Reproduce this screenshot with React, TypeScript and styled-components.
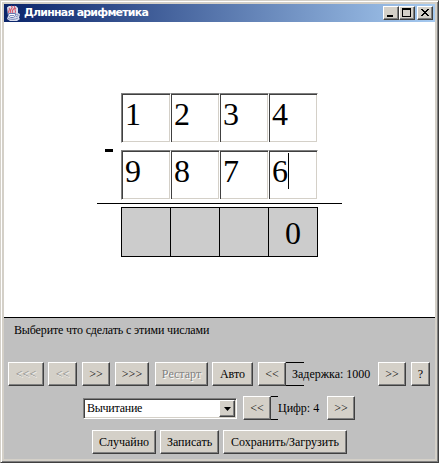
import React from "react";
import styled, { createGlobalStyle } from "styled-components";

const GlobalStyle = createGlobalStyle`
  * { box-sizing: border-box; }
  body { margin: 0; background: #d4d0c8; overflow: hidden; }
`;

const WindowFrame = styled.div`
  width: 439px;
  height: 463px;
  padding: 3px;
  display: flex;
  flex-direction: column;
  background: #d4d0c8;
  border: 1px solid;
  border-color: #d4d0c8 #404040 #404040 #d4d0c8;
  box-shadow: inset 1px 1px #fff, inset -1px -1px #808080;
  font-family: "Liberation Serif", serif;
  font-size: 12px;
  color: #000;
`;

const TitleBar = styled.header`
  height: 18px;
  display: flex;
  align-items: center;
  padding: 0 2px 0 1px;
  background: linear-gradient(to right, #0a246a, #a6caf0);
`;

const Title = styled.h1`
  margin: 0 auto 0 3px;
  font: bold 11px/18px "DejaVu Sans", sans-serif;
  letter-spacing: -0.8px;
  color: #fff;
  white-space: nowrap;
`;

const CaptionButton = styled.button<{ $gap?: boolean }>`
  width: 16px;
  height: 14px;
  padding: 0;
  margin: 0 0 0 ${(p) => (p.$gap ? 2 : 0)}px;
  display: flex;
  background: #d4d0c8;
  border: 1px solid;
  border-color: #fff #404040 #404040 #fff;
  box-shadow: inset -1px -1px #808080;
`;

const Canvas = styled.main`
  height: 295px;
  display: flex;
  flex-direction: column;
  background: #fff;
  padding: 71px 0 0 93px;
`;

const OperandArea = styled.div`
  display: flex;
  align-items: center;
  height: 107px;
`;

const Operator = styled.span`
  width: 24px;
  height: 3px;
  margin-top: 8px;
  padding-left: 8px;
  &::after {
    content: "";
    display: block;
    width: 8px;
    height: 3px;
    background: #000;
  }
`;

const Operands = styled.div`
  display: grid;
  row-gap: 7px;
`;

const DigitRow = styled.div`
  display: grid;
  grid-template-columns: repeat(4, 49px);
`;

const DigitField = styled.div`
  width: 50px;
  height: 50px;
  display: flex;
  border: 1px solid;
  border-color: #808080 #fff #fff #808080;
  box-shadow: inset 1px 1px #404040, inset -1px -1px #d4d0c8;
  padding: 1px 0 0 3px;
  font-size: 32px;
  line-height: 38px;
  & + & { border-left-color: #fff; }
`;

const Caret = styled.i`
  width: 1px;
  height: 36px;
  margin: 1px 0 0 0;
  background: #000;
`;

const SumLine = styled.div`
  width: 245px;
  height: 1px;
  margin: 3px 0 3px;
  background: #000;
`;

const ResultRow = styled.div`
  display: grid;
  grid-template-columns: 50px repeat(3, 49px);
  margin-left: 24px;
`;

const ResultCell = styled.div`
  height: 50px;
  border: 1px solid #000;
  background: #ccc;
  text-align: center;
  font-size: 32px;
  line-height: 50px;
  & + & { border-left: 0; }
`;

const Panel = styled.section`
  flex: 1;
  background: #c0c0c0;
  border-top: 1px solid #000;
`;

const Message = styled.p`
  margin: 0;
  padding: 5px 0 0 10px;
  height: 44px;
  line-height: 14px;
  letter-spacing: -0.14px;
`;

const Controls = styled.div<{ $left: number; $gapBelow?: number }>`
  display: flex;
  align-items: center;
  height: 24px;
  margin: 0 0 ${(p) => p.$gapBelow ?? 0}px;
  padding-left: ${(p) => p.$left}px;
`;

const PushButton = styled.button<{ $width: number; $after?: number }>`
  flex: none;
  width: ${(p) => p.$width}px;
  height: 24px;
  margin: 0 ${(p) => p.$after ?? 0}px 0 0;
  padding: 0 0 1px;
  background: #d4d0c8;
  border: 1px solid;
  border-color: #fff #404040 #404040 #fff;
  box-shadow: inset -1px -1px #808080;
  font: inherit;
  line-height: 14px;
  white-space: nowrap;
  color: #000;
  &:disabled {
    color: #808080;
    text-shadow: 1px 1px #fff;
  }
`;

const Bracketed = styled.div<{ $width: number; $hook: number; $indent: number }>`
  flex: none;
  width: ${(p) => p.$width}px;
  height: 24px;
  padding-left: ${(p) => p.$indent}px;
  line-height: 24px;
  white-space: nowrap;
  background:
    linear-gradient(#000, #000) 0 0 / ${(p) => p.$hook}px 1px no-repeat,
    linear-gradient(#000, #000) 0 23px / ${(p) => p.$hook}px 1px no-repeat;
`;

const Combo = styled.div`
  width: 154px;
  height: 21px;
  margin: 1px 6px 0 0;
  display: flex;
  align-items: center;
  justify-content: space-between;
  padding: 1px 1px 1px 3px;
  background: #fff;
  border: 1px solid;
  border-color: #808080 #fff #fff #808080;
  box-shadow: inset 1px 1px #404040, inset -1px -1px #d4d0c8;
  letter-spacing: -0.25px;
`;

const ComboArrow = styled.button`
  width: 16px;
  height: 17px;
  padding: 0;
  display: flex;
  align-items: center;
  justify-content: center;
  background: #d4d0c8;
  border: 1px solid;
  border-color: #fff #404040 #404040 #fff;
  box-shadow: inset -1px -1px #808080;
`;

const JavaIcon = () => (
  <svg width="16" height="16" viewBox="0 0 16 16" fill="none">
    <path d="M2 2.5 4 1h7l2 2v5l2 1-1 4 1 1-3 2H5l-3-2 1-3z" fill="#d9dded" />
    <path d="M6 1c4 2-3 3 0 7M9 1c3 3-4 3-1 7M4 3c2 2-2 3 0 5M11 3c-3 2 1 2-1 5" stroke="#d75c70" strokeWidth="1.1" />
    <path d="M3.5 8.5h7c0 3-1 4-3.5 4s-3.5-1-3.5-4Z" fill="#fff" stroke="#6577b1" />
    <path d="M11 9.5c3-1 3 2 0 2M3 13.5c3 1.3 7 1.3 10-.5" stroke="#8290bf" />
    <path d="M5 10.5h4" stroke="#8290bf" />
  </svg>
);

const firstNumber = ["1", "2", "3", "4"];
const secondNumber = ["9", "8", "7", "6"];
const result = ["", "", "", "0"];

export default function App() {
  return (
    <>
      <GlobalStyle />
      <WindowFrame>
        <TitleBar>
          <JavaIcon />
          <Title>Длинная арифметика</Title>
          <CaptionButton aria-label="Свернуть">
            <svg width="14" height="12"><path d="M3 8h6v2H3z" /></svg>
          </CaptionButton>
          <CaptionButton aria-label="Развернуть">
            <svg width="14" height="12"><path d="M2 1h9v9H2zM3 3v6h7V3z" fillRule="evenodd" /></svg>
          </CaptionButton>
          <CaptionButton $gap aria-label="Закрыть">
            <svg width="14" height="12" shapeRendering="crispEdges">
              <path d="M3 2h2v1h1v1h2V3h1V2h2v1h-1v1H9v1H8v1h1v1h1v1h1v1H9V8H8V7H6v1H5v1H3V8h1V7h1V6h1V5H5V4H4V3H3z" />
            </svg>
          </CaptionButton>
        </TitleBar>
        <Canvas>
          <OperandArea>
            <Operator aria-label="минус" />
            <Operands>
              <DigitRow>
                {firstNumber.map((d, i) => <DigitField key={i}>{d}</DigitField>)}
              </DigitRow>
              <DigitRow>
                {secondNumber.map((d, i) => (
                  <DigitField key={i}>{d}{i === 3 && <Caret />}</DigitField>
                ))}
              </DigitRow>
            </Operands>
          </OperandArea>
          <SumLine />
          <ResultRow>
            {result.map((d, i) => <ResultCell key={i}>{d}</ResultCell>)}
          </ResultRow>
        </Canvas>
        <Panel>
          <Message>Выберите что сделать с этими числами</Message>
          <Controls $left={4} $gapBelow={10}>
            <PushButton $width={36} $after={4} disabled>&lt;&lt;&lt;</PushButton>
            <PushButton $width={29} $after={5} disabled>&lt;&lt;</PushButton>
            <PushButton $width={28} $after={5}>&gt;&gt;</PushButton>
            <PushButton $width={34} $after={6}>&gt;&gt;&gt;</PushButton>
            <PushButton $width={53} $after={4} disabled>Рестарт</PushButton>
            <PushButton $width={41} $after={5}>Авто</PushButton>
            <PushButton $width={28}>&lt;&lt;</PushButton>
            <Bracketed $width={92} $hook={18} $indent={6}>Задержка: 1000</Bracketed>
            <PushButton $width={28} $after={5}>&gt;&gt;</PushButton>
            <PushButton $width={19}>?</PushButton>
          </Controls>
          <Controls $left={79} $gapBelow={10}>
            <Combo>
              Вычитание
              <ComboArrow aria-label="Открыть список">
                <svg width="7" height="4"><path d="M0 0h7L3.5 4z" /></svg>
              </ComboArrow>
            </Combo>
            <PushButton $width={28}>&lt;&lt;</PushButton>
            <Bracketed $width={56} $hook={7} $indent={7}>Цифр: 4</Bracketed>
            <PushButton $width={28}>&gt;&gt;</PushButton>
          </Controls>
          <Controls $left={88}>
            <PushButton $width={64} $after={4}>Случайно</PushButton>
            <PushButton $width={59} $after={4}>Записать</PushButton>
            <PushButton $width={124}>Сохранить/Загрузить</PushButton>
          </Controls>
        </Panel>
      </WindowFrame>
    </>
  );
}
